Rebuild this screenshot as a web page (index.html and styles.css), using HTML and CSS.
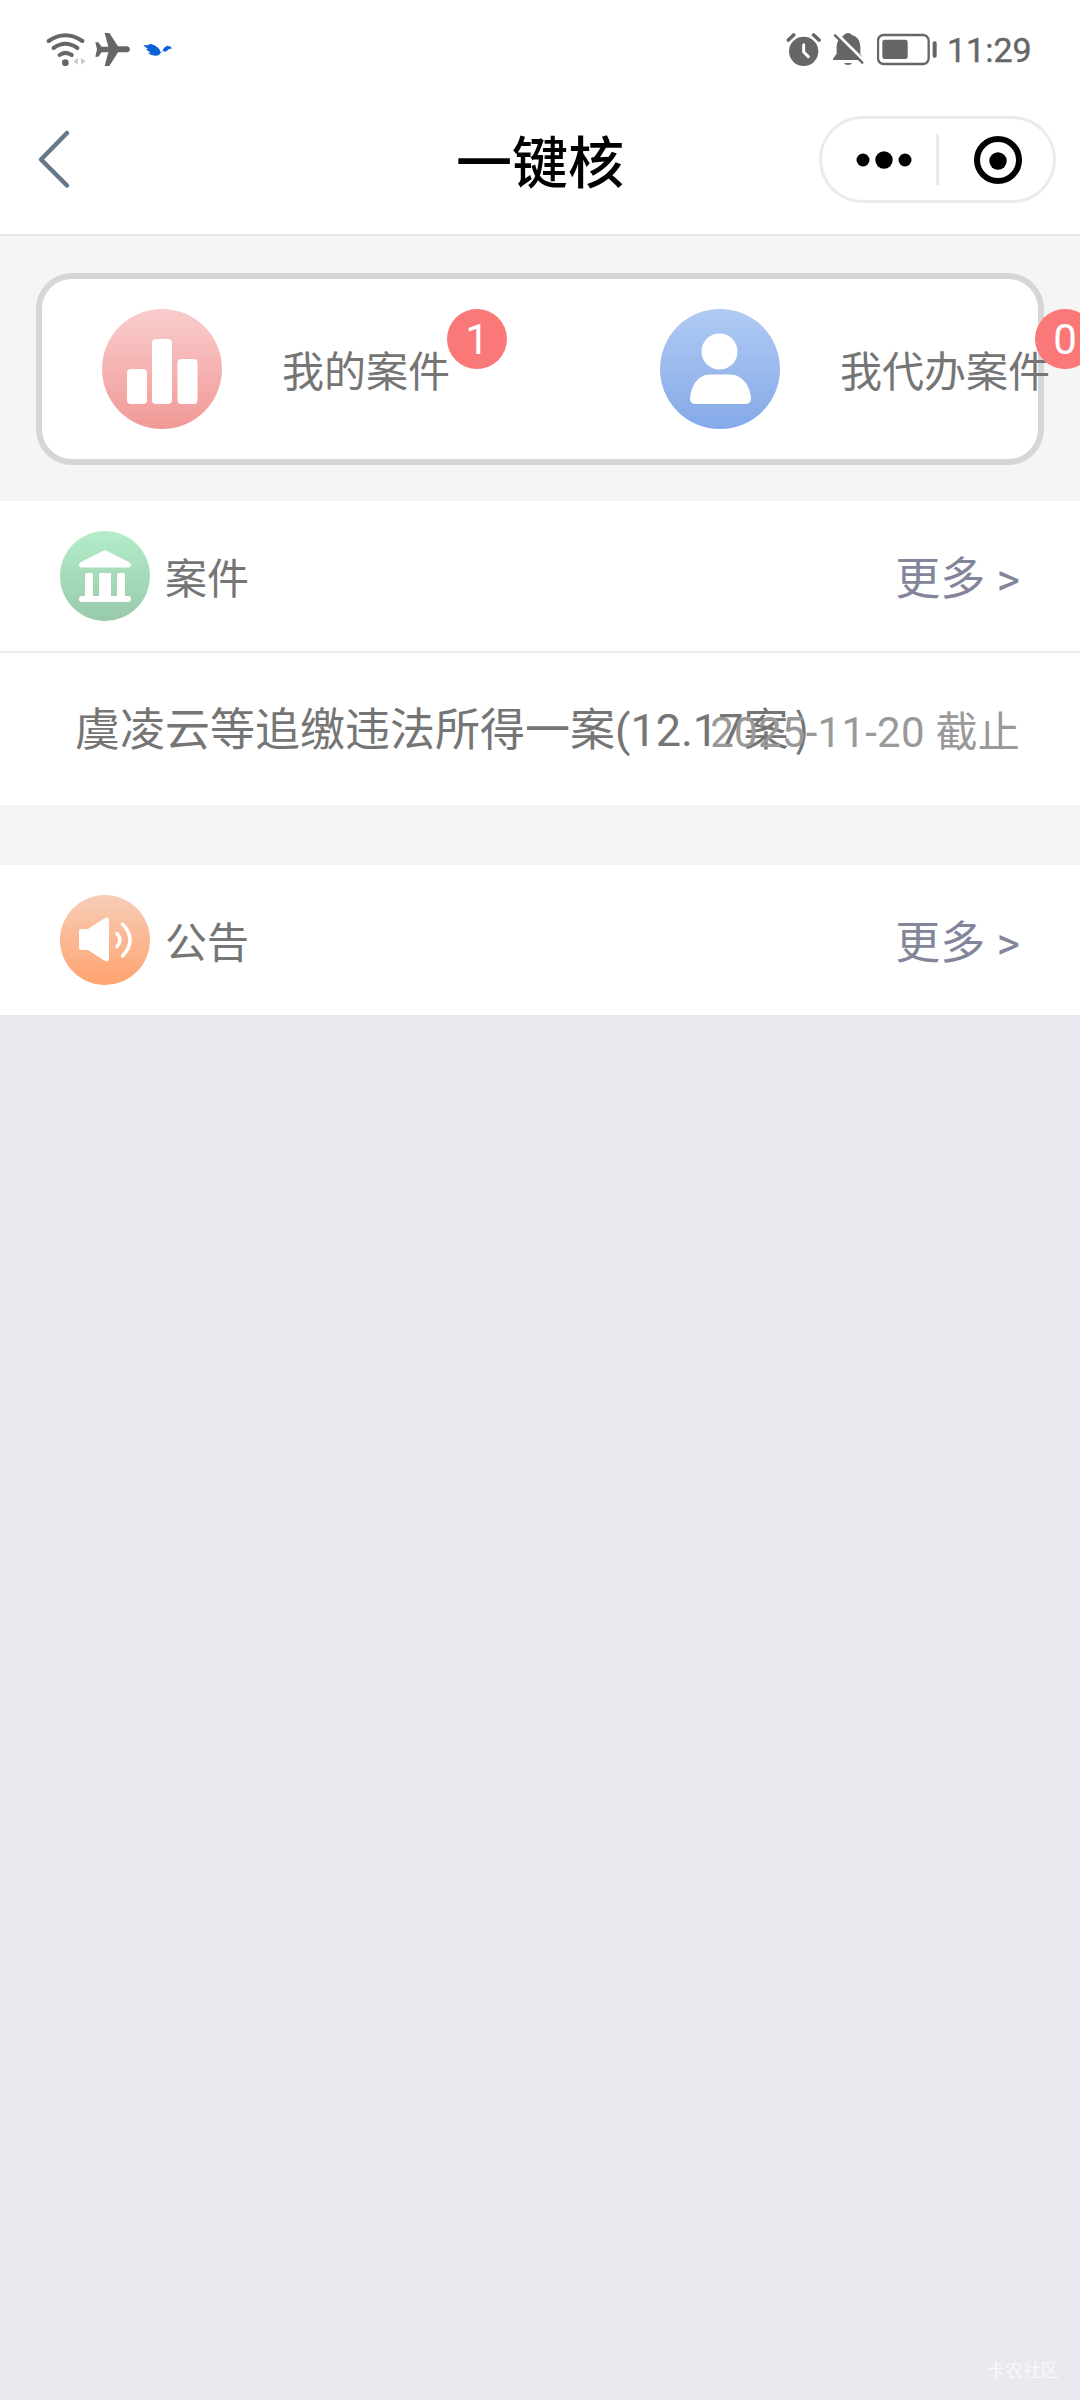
FILE: index.html
```html
<!DOCTYPE html>
<html lang="zh-CN">
<head>
<meta charset="utf-8">
<title>一键核</title>
<link rel="stylesheet" href="styles.css">
</head>
<body>
<div class="status-bar">
  <svg class="wifi" viewBox="48 36 120 105" fill="none" stroke="#666" stroke-width="12" stroke-linecap="round">
    <path d="M56 63Q106 28 157 63M71 84Q106 59 142 84M89 105Q106 92 125 105"/>
    <circle cx="106" cy="128" r="10" fill="#666" stroke="none"/>
    <path d="M144 113v22l-14-11zM153 113v22l14-11z" fill="#ccc" stroke="none"/>
  </svg>
  <svg class="plane" viewBox="192 36 108 105" fill="#666">
    <path d="M224 39h14l26 40h28q8 2 8 9t-8 9h-28l-26 41h-14l11-41h-20l-10 13h-9l5-22-5-21h9l10 13h20z"/>
  </svg>
  <svg class="bird" viewBox="340 70 90 42" fill="#0b62d6">
    <path d="M341 76q14 2 22-4 14 4 22 12 6 6 8 14l5-1q1-14 16-19 11 2 14 9-11-1-14 5-7 7-12 2-4-1-7 4-5 9-15 10-14 1-25-7l8-3q-10-3-14-11l8 1q-11-4-16-12z"/>
  </svg>
  <div class="status-right">
    <svg class="alarm" viewBox="48 36 105 102" fill="#666">
      <circle cx="101" cy="94" r="44"/>
      <path d="M55 60l16-15M147 60l-16-15" stroke="#666" stroke-width="11" stroke-linecap="round"/>
      <path d="M101 74v22l14 14" fill="none" stroke="#fff" stroke-width="9" stroke-linecap="round" stroke-linejoin="round"/>
    </svg>
    <svg class="bell" viewBox="189 36 93 102" fill="#666">
      <path d="M222 45q4-6 12-6t12 6q24 7 25 34v22l10 17v2h-92v-4l11-15V78q1-14 8-22zM222 129h24q-3 6-12 6t-12-6z"/>
      <path d="M199 40l84 83" stroke="#fff" stroke-width="9"/>
      <path d="M195 46l82 82" stroke="#666" stroke-width="7" stroke-linecap="round"/>
    </svg>
    <svg class="battery" viewBox="321 36 180 102" fill="#666">
      <rect x="324" y="45" width="152" height="87" rx="17" fill="none" stroke="#666" stroke-width="7"/>
      <rect x="337" y="59" width="76" height="58" rx="7"/>
      <rect x="488" y="64" width="12" height="49" rx="5"/>
    </svg>
    <span class="clock">11:29</span>
  </div>
</div>

<header class="nav">
  <svg class="back" viewBox="0 0 34 62" fill="none" stroke="#65798a" stroke-width="4.5" stroke-linecap="round" stroke-linejoin="round"><path d="M30 5L4 31.500l26 26"/></svg>
  <h1 class="nav-title">一键核</h1>
  <div class="capsule">
    <svg class="dots" viewBox="0 0 56 20"><circle cx="7" cy="10" r="6.5"/><circle cx="28" cy="10" r="8.7"/><circle cx="49" cy="10" r="6.5"/></svg>
    <i class="capsule-line"></i>
    <svg class="target" viewBox="0 0 48 48"><circle cx="24" cy="24" r="21" fill="none" stroke="#000" stroke-width="6"/><circle cx="24" cy="25" r="8.7"/></svg>
  </div>
</header>

<section class="summary">
  <div class="card">
    <div class="entry">
      <svg class="entry-icon" viewBox="0 0 120 120">
        <defs><linearGradient id="red" x2="0" y2="1"><stop stop-color="#f8cdcd"/><stop offset="1" stop-color="#f19996"/></linearGradient></defs>
        <circle cx="60" cy="60" r="60" fill="url(#red)"/>
        <g fill="#fff"><rect x="25" y="60" width="20" height="35" rx="4"/><rect x="50" y="30" width="20" height="65" rx="4"/><rect x="75.500" y="50" width="20" height="45" rx="4"/></g>
      </svg>
      <span class="entry-label"><span class="entry-text">我的案件</span><b class="badge badge-first">1</b></span>
    </div>
    <div class="entry">
      <svg class="entry-icon" viewBox="0 0 120 120">
        <defs><linearGradient id="blue" x2="0" y2="1"><stop stop-color="#b0caf3"/><stop offset="1" stop-color="#84a9e8"/></linearGradient></defs>
        <circle cx="60" cy="60" r="60" fill="url(#blue)"/>
        <g fill="#fff"><circle cx="59.500" cy="42.500" r="18"/><path d="M50 65.500h20c12 0 20 11 21 24q0 5.500-6 5.500H36q-6 0-6-5.500c1-13 8-24 20-24z"/></g>
      </svg>
      <span class="entry-label"><span class="entry-text">我代办案件</span><b class="badge badge-second">0</b></span>
    </div>
  </div>
</section>

<section class="panel">
  <div class="panel-head">
    <svg class="panel-icon" viewBox="0 0 90 90">
      <defs><linearGradient id="green" x2="0" y2="1"><stop stop-color="#b4edc9"/><stop offset="1" stop-color="#97c9aa"/></linearGradient></defs>
      <circle cx="45" cy="45" r="45" fill="url(#green)"/>
      <path fill="#fff" d="M43 20q2-1.500 4 0l22 11q2 1 2 3t-2 2.500H21q-2-.5-2-2.500t2-3zM27 42h4q2 0 2 2v21h6V42h12v23h6V44q0-2 2-2h4q2 0 2 2v21h3q3 0 3 3t-3 3H22q-3 0-3-3t3-3h3V44q0-2 2-2z"/>
    </svg>
    <span class="panel-title">案件</span>
    <a class="more">更多 &gt;</a>
  </div>
  <div class="case-row">
    <span class="case-name">虞凌云等追缴违法所得一案(12.17案<span class="case-paren">)</span></span>
    <span class="case-date">2025-11-20 截止</span>
  </div>
</section>

<section class="panel">
  <div class="panel-head">
    <svg class="panel-icon" viewBox="0 0 90 90">
      <defs><linearGradient id="orange" x2="0" y2="1"><stop stop-color="#f7cdb8"/><stop offset="1" stop-color="#ffa36e"/></linearGradient></defs>
      <circle cx="45" cy="45" r="45" fill="url(#orange)"/>
      <path fill="#fff" d="M21 34h7l17-11q4-1.500 4 2v39q0 3.500-4 2L28 55h-7q-2 0-2-2V36q0-2 2-2z"/>
      <path fill="none" stroke="#fff" stroke-width="3.500" stroke-linecap="round" d="M57 38.500q6 6.500 0 13M62.500 29q15 16 0 32"/>
    </svg>
    <span class="panel-title">公告</span>
    <a class="more">更多 &gt;</a>
  </div>
</section>

<div class="watermark">卡农社区</div>
</body>
</html>
```
FILE: styles.css
```css
* { box-sizing: border-box; }
body {
  margin: 0;
  width: 1080px;
  height: 2400px;
  overflow: hidden;
  display: flex;
  flex-direction: column;
  background: #e9e9ef;
  color: #757575;
  font-family: Roboto, "Noto Sans CJK SC", sans-serif;
}
svg { display: block; flex: none; }

.status-bar {
  height: 100px;
  padding: 32px 48px 0 46px;
  display: flex;
  align-items: flex-start;
  background: #fff;
}
.wifi { width: 40px; height: 35px; }
.plane { width: 36px; height: 35px; margin-left: 8px; }
.bird { width: 30px; height: 14px; margin: 11px 0 0 13px; }
.status-right { margin-left: auto; display: flex; }
.alarm { width: 35px; height: 34px; }
.bell { width: 31px; height: 34px; margin-left: 12px; }
.battery { width: 60px; height: 34px; margin-left: 13px; }
.clock {
  width: 85px;
  margin-left: 10px;
  font-size: 34px;
  line-height: 36px;
  color: #666;
  -webkit-text-stroke: 0.4px #666;
}

.nav {
  height: 136px;
  padding: 16px 24px 0 37px;
  display: grid;
  grid-template-columns: 236px 1fr 236px;
  align-items: start;
  background: #fff;
  border-bottom: 2px solid #e6e6e6;
}
.back { width: 34px; height: 62px; margin-top: 12px; }
.nav-title {
  margin: 6px 0 0;
  padding-right: 13px;
  text-align: center;
  font-size: 56px;
  line-height: 84px;
  font-weight: 500;
  color: #000;
}
.capsule {
  width: 237px;
  height: 87px;
  margin-left: -1px;
  display: flex;
  align-items: center;
  border: 3px solid #ebebeb;
  border-radius: 44px;
}
.dots { width: 56px; height: 20px; margin-left: 34px; }
.capsule-line { width: 3px; height: 51px; margin-left: 24px; background: #ebebeb; }
.target { width: 48px; height: 48px; margin-left: 35px; }

.summary { height: 265px; padding: 37px 36px 0; background: #f5f5f5; }
.card {
  height: 192px;
  padding: 30px 0 0 60px;
  display: grid;
  grid-template-columns: 558px 390px;
  border: 6px solid #d6d6d6;
  border-radius: 36px;
  background: #fff;
}
.entry { height: 120px; display: flex; align-items: center; gap: 60px; }
.entry-icon { width: 120px; height: 120px; }
.entry-label {
  position: relative;
  white-space: nowrap;
  font-size: 42px;
  line-height: 60px;
}
.entry-text { display: block; height: 60px; padding-top: 4px; }
.badge {
  position: absolute;
  top: -30px;
  width: 60px;
  height: 60px;
  border-radius: 50%;
  background: #fb7878;
  color: #fff;
  font-weight: 400;
  text-align: center;
  line-height: 61px;
}
.badge-first { left: 165px; }
.badge-second { left: 195px; }

.panel { background: #fff; }
.panel + .panel { border-top: 60px solid #f5f5f5; }
.panel-head { height: 150px; padding: 0 60px; display: flex; align-items: center; }
.panel-icon { width: 90px; height: 90px; }
.panel-title { margin-left: 15px; padding-top: 8px; font-size: 42px; line-height: 60px; }
.more { margin-left: auto; padding-top: 8px; font-size: 45px; line-height: 60px; color: #83869a; }
.case-row {
  height: 154px;
  padding: 8px 60px 0 75px;
  display: flex;
  align-items: center;
  justify-content: space-between;
  border-top: 2px solid #ececec;
  white-space: nowrap;
}
.case-name { width: 560px; height: 64px; font-size: 45px; line-height: 60px; }
.case-paren {
  margin-left: 6px;
  font-family: "Noto Sans CJK SC", sans-serif;
  line-height: 1;
}
.case-date { font-size: 42px; line-height: 60px; letter-spacing: 0.25px; color: #999; }

.watermark {
  margin: auto 21px 16px auto;
  font-size: 18px;
  line-height: 26px;
  color: #f8f8fb;
}
```
